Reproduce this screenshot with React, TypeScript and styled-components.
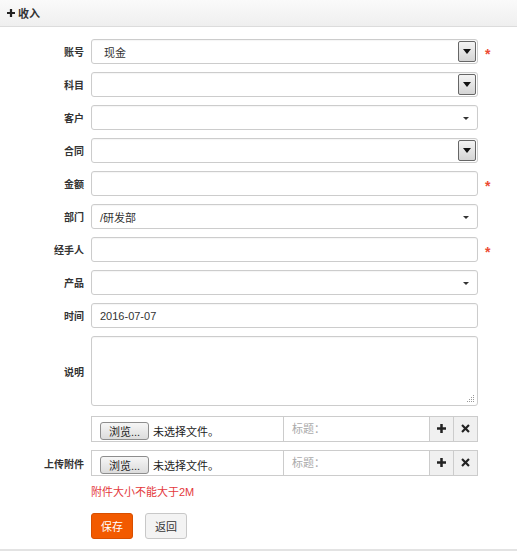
import React from 'react'
import styled, { createGlobalStyle } from 'styled-components'

const Global = createGlobalStyle`
  html, body { margin: 0; padding: 0; background: #fff; }
  body {
    font-family: "Liberation Sans", "Noto Sans CJK SC", Arial, sans-serif;
    font-size: 12px;
    color: #333;
  }
  * { box-sizing: border-box; }
`

const Panel = styled.div`
  width: 517px;
  border-bottom: 2px solid #e3e3e3;
  padding-bottom: 10px;
`

const Header = styled.div`
  height: 27px;
  display: flex;
  align-items: center;
  gap: 3px;
  padding-left: 7px;
  background: linear-gradient(#fafafa, #efefef);
  border-bottom: 1px solid #dcdcdc;
  font-weight: bold;
  font-size: 11px;
  color: #333;
`

const Form = styled.form`
  padding-top: 12px;
  display: flex;
  flex-direction: column;
  gap: 8px;
`

const Row = styled.div<{ $mt?: number }>`
  display: grid;
  grid-template-columns: 84px 387px 20px;
  column-gap: 7px;
  align-items: center;
  margin-top: ${p => p.$mt ?? 0}px;
`

const Label = styled.label`
  text-align: right;
  font-weight: bold;
  font-size: 10px;
  color: #333;
`

const Field = styled.div<{ $h?: number }>`
  position: relative;
  height: ${p => p.$h ?? 25}px;
  border: 1px solid #ccc;
  border-radius: 3px;
  background: #fff;
  display: flex;
  align-items: center;
  padding-left: 8px;
  font-size: 11px;
  color: #333;
  box-shadow: inset 0 1px 1px rgba(0, 0, 0, 0.04);
`

const Value = styled.span<{ $pad?: number }>`
  padding-left: ${p => p.$pad ?? 0}px;
`

const NativeArrow = styled.div`
  position: absolute;
  right: 1px;
  top: 1px;
  bottom: 1px;
  width: 18px;
  border: 1px solid #666;
  border-radius: 2px;
  background: linear-gradient(#f4f4f4, #d4d4d4);
  display: flex;
  align-items: center;
  justify-content: center;
  &::after {
    content: '';
    border-left: 4px solid transparent;
    border-right: 4px solid transparent;
    border-top: 5px solid #111;
  }
`

const Caret = styled.div`
  position: absolute;
  right: 8px;
  top: 50%;
  margin-top: -1px;
  border-left: 3px solid transparent;
  border-right: 3px solid transparent;
  border-top: 3px solid #333;
`

const Star = styled.span`
  color: #ec4b33;
  font-size: 14px;
  font-weight: bold;
  line-height: 1;
  padding-top: 4px;
`

const Grip = styled.svg`
  position: absolute;
  right: 2px;
  bottom: 2px;
`

const FileGroup = styled.div`
  display: flex;
  height: 26px;
`

const FileBox = styled.div`
  width: 192px;
  border: 1px solid #ccc;
  border-right: none;
  display: flex;
  align-items: center;
  padding-left: 8px;
  gap: 4px;
  font-size: 11px;
  color: #222;
`

const BrowseBtn = styled.span`
  width: 49px;
  height: 18px;
  margin-top: 4px;
  border: 1px solid #8d8d8d;
  border-radius: 3px;
  background: linear-gradient(#f6f6f6, #dcdcdc);
  display: flex;
  align-items: center;
  justify-content: center;
  font-size: 11px;
  color: #222;
`

const FileText = styled.span`
  margin-top: 4px;
`

const TitleInput = styled.div`
  width: 147px;
  border: 1px solid #ccc;
  display: flex;
  align-items: center;
  padding-left: 8px;
  color: #aaa;
  font-size: 11px;
  padding-bottom: 2px;
`

const AddOn = styled.div`
  width: 24px;
  border: 1px solid #ccc;
  border-left: none;
  background: #f0f0f0;
  display: flex;
  align-items: center;
  justify-content: center;
  padding-bottom: 2px;
`

const Note = styled.div`
  color: #e4393c;
  font-size: 11px;
  margin-top: -1px;
`

const Buttons = styled.div`
  display: flex;
  gap: 12px;
  margin-top: 14px;
`

const Btn = styled.button<{ $primary?: boolean }>`
  width: 42px;
  height: 26px;
  padding: 0;
  border-radius: 3px;
  font-family: inherit;
  font-size: 11px;
  border: 1px solid ${p => (p.$primary ? '#d84f00' : '#c8c8c8')};
  background: ${p => (p.$primary ? '#f25a00' : '#f3f3f3')};
  color: ${p => (p.$primary ? '#fff' : '#333')};
`

const PlusIcon = ({ size = 9 }: { size?: number }) => (
  <svg width={size} height={size} viewBox="0 0 10 10">
    <path d="M3.6 0h2.8v3.6H10v2.8H6.4V10H3.6V6.4H0V3.6h3.6z" fill="#222" />
  </svg>
)

const CrossIcon = () => (
  <svg width={9} height={9} viewBox="0 0 10 10">
    <path d="M2 0.3L5 3.3 8 0.3 9.7 2 6.7 5 9.7 8 8 9.7 5 6.7 2 9.7 0.3 8 3.3 5 0.3 2z" fill="#222" />
  </svg>
)

type Kind = 'native' | 'chosen' | 'text'

const fields: { label: string; value?: string; kind: Kind; req?: boolean; pad?: number }[] = [
  { label: '账号', value: '现金', kind: 'native', req: true, pad: 4 },
  { label: '科目', kind: 'native' },
  { label: '客户', kind: 'chosen' },
  { label: '合同', kind: 'native' },
  { label: '金额', kind: 'text', req: true },
  { label: '部门', value: '/研发部', kind: 'chosen' },
  { label: '经手人', kind: 'text', req: true },
  { label: '产品', kind: 'chosen' },
  { label: '时间', value: '2016-07-07', kind: 'text' },
]

const FileRow = ({ label, mt }: { label?: string; mt?: number }) => (
  <Row $mt={mt}>
    <Label>{label}</Label>
    <FileGroup>
      <FileBox>
        <BrowseBtn>浏览...</BrowseBtn>
        <FileText>未选择文件。</FileText>
      </FileBox>
      <TitleInput>标题：</TitleInput>
      <AddOn><PlusIcon /></AddOn>
      <AddOn><CrossIcon /></AddOn>
    </FileGroup>
    <span />
  </Row>
)

export default function App() {
  return (
    <Panel>
      <Global />
      <Header>
        <PlusIcon size={8} />
        <span>收入</span>
      </Header>
      <Form>
        {fields.map(f => (
          <Row key={f.label}>
            <Label>{f.label}</Label>
            <Field>
              <Value $pad={f.pad}>{f.value}</Value>
              {f.kind === 'native' && <NativeArrow />}
              {f.kind === 'chosen' && <Caret />}
            </Field>
            {f.req ? <Star>*</Star> : <span />}
          </Row>
        ))}
        <Row>
          <Label>说明</Label>
          <Field $h={70}>
            <Grip width="8" height="8" viewBox="0 0 8 8">
              <g fill="#999">
                <rect x="6" y="0" width="1" height="1" />
                <rect x="4" y="2" width="1" height="1" />
                <rect x="6" y="2" width="1" height="1" />
                <rect x="2" y="4" width="1" height="1" />
                <rect x="4" y="4" width="1" height="1" />
                <rect x="6" y="4" width="1" height="1" />
                <rect x="0" y="6" width="1" height="1" />
                <rect x="2" y="6" width="1" height="1" />
                <rect x="4" y="6" width="1" height="1" />
                <rect x="6" y="6" width="1" height="1" />
              </g>
            </Grip>
          </Field>
          <span />
        </Row>
        <FileRow mt={2} />
        <FileRow label="上传附件" />
        <Row>
          <span />
          <div>
            <Note>附件大小不能大于2M</Note>
            <Buttons>
              <Btn $primary type="button">保存</Btn>
              <Btn type="button">返回</Btn>
            </Buttons>
          </div>
          <span />
        </Row>
      </Form>
    </Panel>
  )
}
